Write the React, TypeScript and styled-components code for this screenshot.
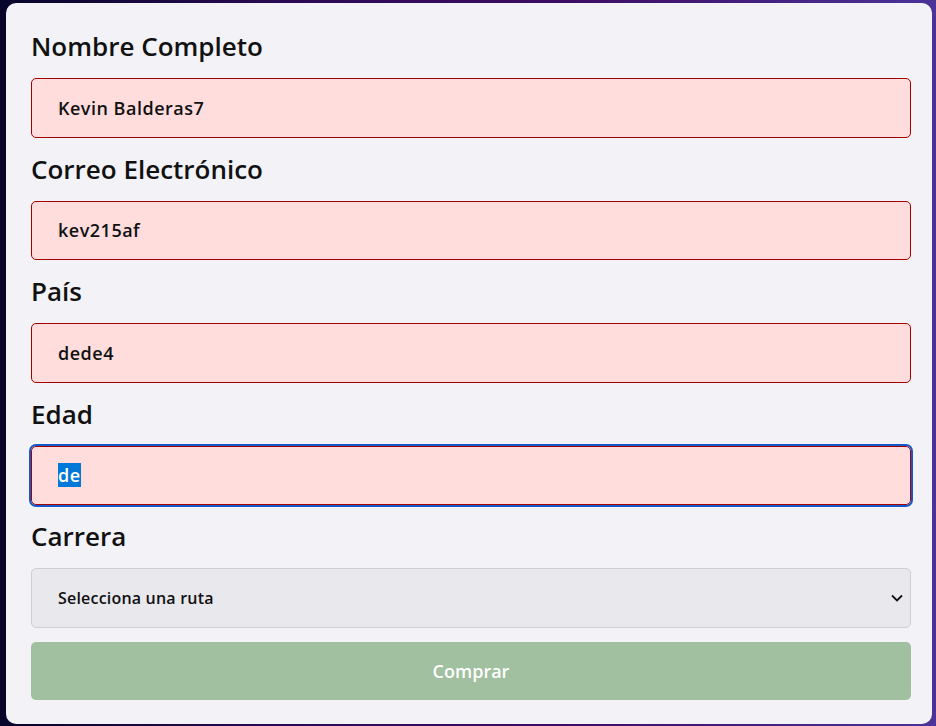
import React, { useEffect, useRef } from "react";
import styled, { createGlobalStyle } from "styled-components";

const Global = createGlobalStyle`
  html, body { margin: 0; padding: 0; }
  body {
    min-height: 726px;
    background: linear-gradient(90deg, #06052a 0%, #2a0a52 30%, #3d0c62 60%, #4b3398 100%);
    font-family: "Open Sans", "Noto Sans", sans-serif;
  }
  * { box-sizing: border-box; }
`;

const Page = styled.div`
  padding: 3px 4px 3px 6px;
`;

const Card = styled.form`
  background: #f2f2f7;
  border-radius: 10px;
  padding: 28px 21px 24px 25px;
  display: flex;
  flex-direction: column;
  gap: 16px;
`;

const Field = styled.div`
  display: flex;
  flex-direction: column;
  gap: 16px;
`;

const Label = styled.label`
  font-size: 26px;
  line-height: 31px;
  font-weight: 600;
  color: #111;
`;

const Input = styled.input`
  height: 59.5px;
  width: 100%;
  border: 1px solid #a30000;
  border-radius: 5px;
  background: #ffdddd;
  padding: 0 26px;
  font-family: inherit;
  font-size: 18px;
  font-weight: 600;
  letter-spacing: 0.5px;
  color: #111;
  outline: none;
  &:focus {
    outline: 2px solid #1558c8;
    outline-offset: 0;
  }
  &::selection {
    background: #0078d7;
    color: #fff;
  }
`;

const SelectWrap = styled.div`
  position: relative;
`;

const Select = styled.select`
  appearance: none;
  -webkit-appearance: none;
  height: 59.5px;
  width: 100%;
  border: 1px solid #cfcfd4;
  border-radius: 5px;
  background: #e8e8ed;
  padding: 0 26px;
  font-family: inherit;
  font-size: 16px;
  font-weight: 600;
  letter-spacing: 0.2px;
  color: #111;
`;

const Chevron = styled.svg`
  position: absolute;
  right: 8px;
  top: 50%;
  transform: translateY(-50%);
  pointer-events: none;
`;

const Button = styled.button`
  margin-top: -2px;
  height: 58px;
  width: 100%;
  border: none;
  border-radius: 5px;
  background: #a0c0a0;
  color: #fff;
  font-family: inherit;
  font-size: 18px;
  font-weight: 600;
`;

export default function App() {
  const edadRef = useRef<HTMLInputElement>(null);
  useEffect(() => {
    const el = edadRef.current;
    if (el) {
      el.focus();
      el.select();
    }
  }, []);
  return (
    <>
      <Global />
      <Page>
        <Card onSubmit={(e) => e.preventDefault()}>
          <Field>
            <Label htmlFor="nombre">Nombre Completo</Label>
            <Input id="nombre" defaultValue="Kevin Balderas7" />
          </Field>
          <Field>
            <Label htmlFor="correo">Correo Electrónico</Label>
            <Input id="correo" defaultValue="kev215af" />
          </Field>
          <Field>
            <Label htmlFor="pais">País</Label>
            <Input id="pais" defaultValue="dede4" />
          </Field>
          <Field>
            <Label htmlFor="edad">Edad</Label>
            <Input id="edad" ref={edadRef} defaultValue="de" />
          </Field>
          <Field>
            <Label htmlFor="carrera">Carrera</Label>
            <SelectWrap>
              <Select id="carrera" defaultValue="">
                <option value="">Selecciona una ruta</option>
              </Select>
              <Chevron width="12" height="8" viewBox="0 0 12 8">
                <path d="M1 1.5 L6 6.5 L11 1.5" fill="none" stroke="#111" strokeWidth="1.8" />
              </Chevron>
            </SelectWrap>
          </Field>
          <Button type="submit" disabled>Comprar</Button>
        </Card>
      </Page>
    </>
  );
}
